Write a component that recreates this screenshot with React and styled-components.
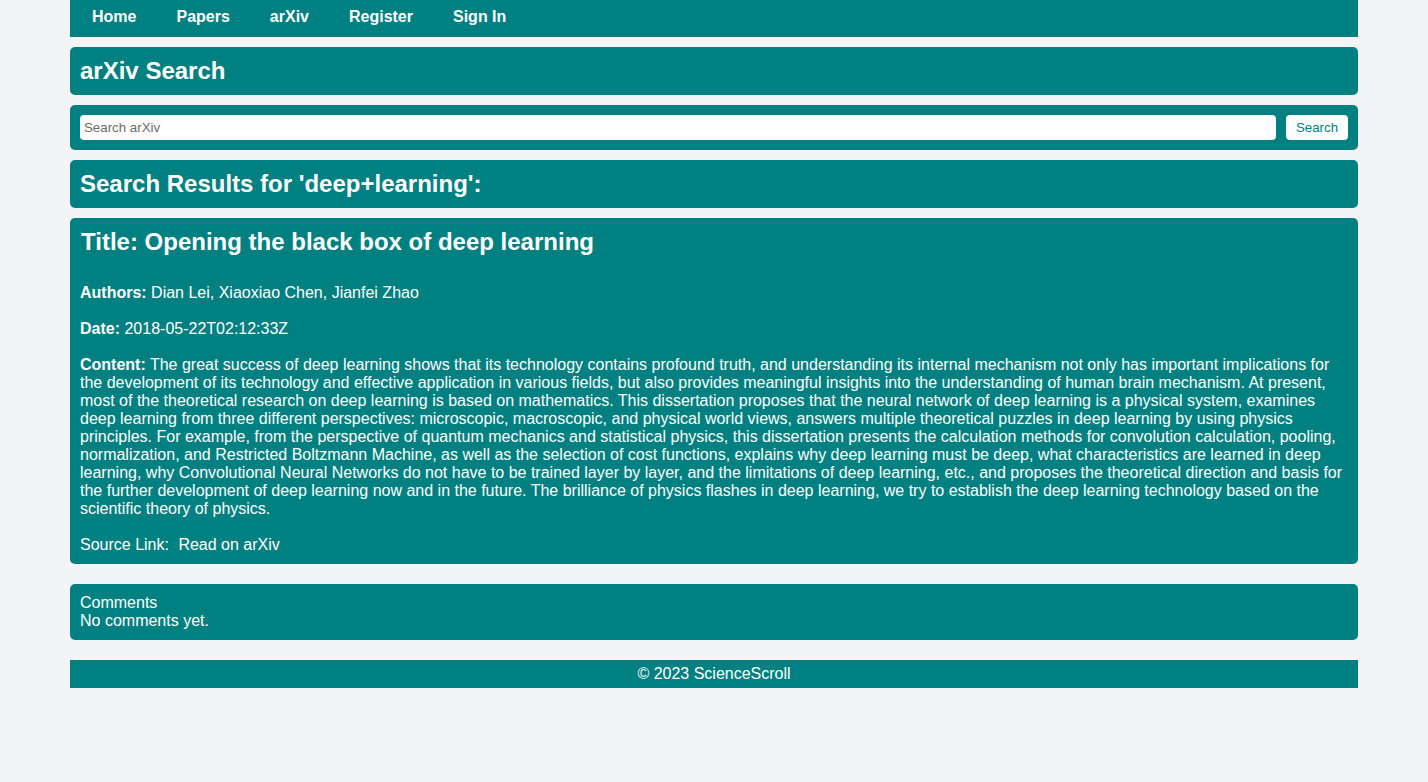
import React from "react";
import styled, { createGlobalStyle } from "styled-components";

const GlobalStyle = createGlobalStyle`
  body {
    margin: 0;
    background: #f3f4f6;
    font-family: "Liberation Sans", Arial, sans-serif;
    color: #fff;
  }
`;

const content =
  "The great success of deep learning shows that its technology contains profound truth, and understanding its internal mechanism not only has important implications for the development of its technology and effective application in various fields, but also provides meaningful insights into the understanding of human brain mechanism. At present, most of the theoretical research on deep learning is based on mathematics. This dissertation proposes that the neural network of deep learning is a physical system, examines deep learning from three different perspectives: microscopic, macroscopic, and physical world views, answers multiple theoretical puzzles in deep learning by using physics principles. For example, from the perspective of quantum mechanics and statistical physics, this dissertation presents the calculation methods for convolution calculation, pooling, normalization, and Restricted Boltzmann Machine, as well as the selection of cost functions, explains why deep learning must be deep, what characteristics are learned in deep learning, why Convolutional Neural Networks do not have to be trained layer by layer, and the limitations of deep learning, etc., and proposes the theoretical direction and basis for the further development of deep learning now and in the future. The brilliance of physics flashes in deep learning, we try to establish the deep learning technology based on the scientific theory of physics.";

export default function App() {
  return (
    <>
      <GlobalStyle />
      <Page>
        <Nav>
          <NavLink>Home</NavLink>
          <NavLink>Papers</NavLink>
          <NavLink>arXiv</NavLink>
          <NavLink>Register</NavLink>
          <NavLink>Sign In</NavLink>
        </Nav>
        <Main>
          <Panel>
            <Heading>arXiv Search</Heading>
          </Panel>
          <SearchForm onSubmit={(e) => e.preventDefault()}>
            <SearchInput placeholder="Search arXiv" />
            <SearchButton type="submit">Search</SearchButton>
          </SearchForm>
          <Panel>
            <Heading>Search Results for 'deep+learning':</Heading>
          </Panel>
          <Card>
            <Title>Title: Opening the black box of deep learning</Title>
            <Field>
              <b>Authors:</b> Dian Lei, Xiaoxiao Chen, Jianfei Zhao
            </Field>
            <Field>
              <b>Date:</b> 2018-05-22T02:12:33Z
            </Field>
            <Field>
              <b>Content:</b> {content}
            </Field>
            <Field>
              Source Link: <SourceLink>Read on arXiv</SourceLink>
            </Field>
          </Card>
          <Comments>
            <div>Comments</div>
            <div>No comments yet.</div>
          </Comments>
        </Main>
        <Footer>© 2023 ScienceScroll</Footer>
      </Page>
    </>
  );
}

const Page = styled.div`
  width: 1288px;
  margin: 0 auto;
  display: flex;
  flex-direction: column;
`;

const Nav = styled.nav`
  background: #008080;
  height: 37px;
  display: flex;
  align-items: center;
  padding: 0 2px;
  box-sizing: border-box;
`;

const NavLink = styled.a`
  padding: 0 20px;
  font-size: 16px;
  font-weight: bold;
  color: #fff;
  cursor: pointer;
  margin-top: -4px;
`;

const Main = styled.main`
  display: flex;
  flex-direction: column;
  gap: 10px;
  margin-top: 10px;
`;

const Panel = styled.section`
  background: #008080;
  border-radius: 5px;
  padding: 10px;
`;

const Heading = styled.h1`
  margin: 0;
  font-size: 24px;
  line-height: 28px;
  font-weight: bold;
`;

const SearchForm = styled.form`
  background: #008080;
  border-radius: 5px;
  padding: 10px;
  display: flex;
  gap: 10px;
`;

const SearchInput = styled.input`
  flex: 1;
  height: 25px;
  box-sizing: border-box;
  border: none;
  border-radius: 4px;
  padding: 0 4px;
  font-family: "Liberation Sans", Arial, sans-serif;
  font-size: 13.3px;
  color: #333;
  outline: none;

  &::placeholder {
    color: #6b6b6b;
  }
`;

const SearchButton = styled.button`
  height: 25px;
  width: 62px;
  border: none;
  border-radius: 4px;
  background: #fff;
  color: #008080;
  font-family: "Liberation Sans", Arial, sans-serif;
  font-size: 13.3px;
  cursor: pointer;
`;

const Card = styled.article`
  background: #008080;
  border-radius: 5px;
  padding: 10px;
  font-size: 16px;
  line-height: 18px;
`;

const Title = styled.h2`
  margin: 0 0 28px;
  font-size: 24px;
  line-height: 28px;
  padding-left: 1px;
`;

const Field = styled.p`
  margin: 0 0 18px;

  &:last-child {
    margin-bottom: 0;
  }
`;

const SourceLink = styled.a`
  color: #fff;
  margin-left: 5px;
  cursor: pointer;
`;

const Comments = styled.section`
  margin-top: 10px;
  background: #008080;
  border-radius: 5px;
  padding: 10px;
  font-size: 16px;
  line-height: 18px;
`;

const Footer = styled.footer`
  margin-top: 20px;
  background: #008080;
  height: 28px;
  line-height: 28px;
  text-align: center;
  font-size: 16px;
`;
